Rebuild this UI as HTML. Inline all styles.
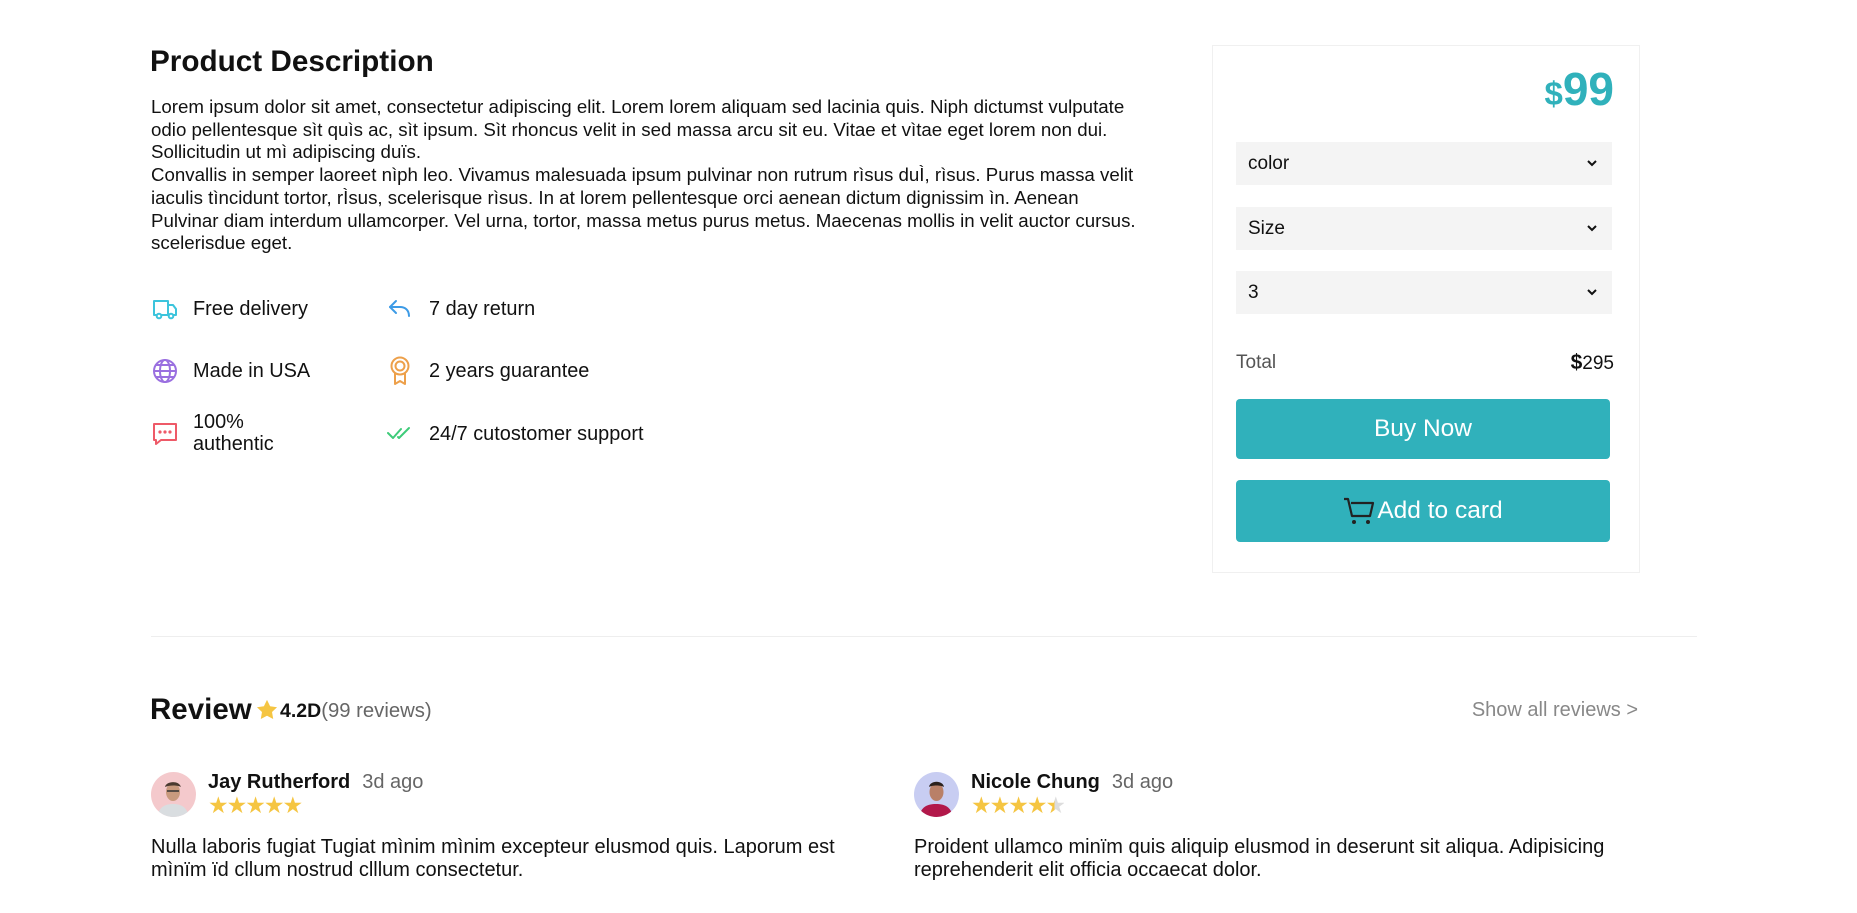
<!DOCTYPE html>
<html><head><meta charset="utf-8"><style>
*{margin:0;padding:0;box-sizing:border-box}
body{width:1857px;height:913px;background:#fff;font-family:"Liberation Sans",Arial,sans-serif;color:#111;position:relative;overflow:hidden}
.a{position:absolute}
.t{white-space:nowrap}
.desc{left:151px;top:96px;font-size:18.7px;line-height:22.7px;white-space:nowrap}
.feat{font-size:19.9px;line-height:22px;white-space:nowrap}
.ic{position:absolute;width:26px;height:26px}
.sel{position:absolute;left:1236px;width:376px;height:43px;background:#f4f4f4;font-size:19px;display:flex;align-items:center;padding-left:12px}
.sel svg{position:absolute;right:14px;top:17px}
.btn{position:absolute;left:1236px;width:374px;background:#30b1bb;border-radius:4px;color:#fff;font-size:24.5px;display:flex;align-items:center;justify-content:center}
.rt{font-size:20px;line-height:23px;white-space:nowrap}
.name{font-size:20px;font-weight:bold;line-height:22px;white-space:nowrap}
.name span{font-weight:normal;color:#666;margin-left:12px}
.stars{font-size:23px;line-height:22px;color:#f5c542;letter-spacing:-2px}
</style></head><body>
<div class="a t" style="left:150px;top:45px;font-size:29.7px;font-weight:bold;line-height:34px">Product Description</div>
<div class="a desc">Lorem ipsum dolor sit amet, consectetur adipiscing elit. Lorem lorem aliquam sed lacinia quis. Niph dictumst vulputate<br>odio pellentesque sìt quìs ac, sìt ipsum. Sìt rhoncus velit in sed massa arcu sit eu. Vitae et vìtae eget lorem non dui.<br>Sollicitudin ut mì adipiscing duïs.<br>Convallis in semper laoreet nìph leo. Vivamus malesuada ipsum pulvinar non rutrum rìsus duÌ, rìsus. Purus massa velit<br>iaculis tìncidunt tortor, rÌsus, scelerisque rìsus. In at lorem pellentesque orci aenean dictum dignissim ìn. Aenean<br>Pulvinar diam interdum ullamcorper. Vel urna, tortor, massa metus purus metus. Maecenas mollis in velit auctor cursus.<br>scelerisdue eget.</div>

<!-- features -->
<svg class="ic" style="left:152px;top:296px" viewBox="0 0 26 26" fill="none" stroke="#3cc4dc" stroke-width="2" stroke-linejoin="round"><path d="M2 5h14v14H2z"/><path d="M16 9h5l3 4v6h-8z"/><circle cx="7" cy="20" r="2.3" fill="#fff"/><circle cx="19" cy="20" r="2.3" fill="#fff"/></svg>
<div class="a feat" style="left:193px;top:298px">Free delivery</div>
<svg class="ic" style="left:387px;top:296px" viewBox="0 0 26 26" fill="none" stroke="#3d9be6" stroke-width="2" stroke-linecap="round" stroke-linejoin="round"><path d="M9 5L3 11l6 6"/><path d="M3 11h10c5 0 9 3 9 9"/></svg>
<div class="a feat" style="left:429px;top:298px">7 day return</div>

<svg class="ic" style="left:152px;top:358px" viewBox="0 0 26 26" fill="none" stroke="#9a6fe0" stroke-width="2"><circle cx="13" cy="13" r="11"/><ellipse cx="13" cy="13" rx="5" ry="11"/><path d="M2 13h22M4 7h18M4 19h18"/></svg>
<div class="a feat" style="left:193px;top:360px">Made in USA</div>
<svg class="ic" style="left:387px;top:356px;height:30px" viewBox="0 0 26 30" fill="none" stroke="#eda04a" stroke-width="2" stroke-linejoin="round"><circle cx="13" cy="10" r="8.5"/><circle cx="13" cy="10" r="4.5"/><path d="M8 17v11l5-3 5 3V17"/></svg>
<div class="a feat" style="left:429px;top:360px">2 years guarantee</div>

<svg class="ic" style="left:152px;top:421px" viewBox="0 0 26 26" fill="none" stroke="#ee5a68" stroke-width="2" stroke-linejoin="round"><path d="M2 3h22v16H9l-5 4v-4H2z"/><circle cx="8" cy="11" r="0.6" fill="#ee5a68"/><circle cx="13" cy="11" r="0.6" fill="#ee5a68"/><circle cx="18" cy="11" r="0.6" fill="#ee5a68"/></svg>
<div class="a feat" style="left:193px;top:411px">100%<br>authentic</div>
<svg class="ic" style="left:387px;top:421px" viewBox="0 0 26 26" fill="none" stroke="#3ecb79" stroke-width="2" stroke-linecap="round" stroke-linejoin="round"><path d="M1 12l5 5 8-9"/><path d="M11 16l1 1 10-10"/></svg>
<div class="a feat" style="left:429px;top:423px">24/7 cutostomer support</div>

<!-- card -->
<div class="a" style="left:1212px;top:45px;width:428px;height:528px;border:1px solid #f0f0f0"></div>
<div class="a t" style="right:243px;top:65px;color:#30b1bb;font-weight:bold;line-height:48px"><span style="font-size:33px">$</span><span style="font-size:46px">99</span></div>
<div class="sel" style="top:142px">color<svg width="12" height="9" viewBox="0 0 12 9"><path d="M2 2l4 4 4-4" fill="none" stroke="#111" stroke-width="2"/></svg></div>
<div class="sel" style="top:207px">Size<svg width="12" height="9" viewBox="0 0 12 9"><path d="M2 2l4 4 4-4" fill="none" stroke="#111" stroke-width="2"/></svg></div>
<div class="sel" style="top:271px">3<svg width="12" height="9" viewBox="0 0 12 9"><path d="M2 2l4 4 4-4" fill="none" stroke="#111" stroke-width="2"/></svg></div>
<div class="a t" style="left:1236px;top:352px;font-size:19px;color:#555;line-height:22px">Total</div>
<div class="a t" style="right:243px;top:352px;font-size:19px;line-height:22px"><b style="font-size:21px">$</b>295</div>
<div class="btn" style="top:399px;height:60px">Buy Now</div>
<div class="btn" style="top:480px;height:62px"><svg width="32" height="30" viewBox="0 0 32 30" style="margin-right:2px"><path d="M1 3h4l4 17h18l3-13H8" fill="none" stroke="#222" stroke-width="2.2" stroke-linejoin="round"/><circle cx="11" cy="26" r="2" fill="#222"/><circle cx="25" cy="26" r="2" fill="#222"/></svg>Add to card</div>

<div class="a" style="left:151px;top:636px;width:1546px;height:1px;background:#eee"></div>

<!-- reviews -->
<div class="a t" style="left:150px;top:693px;font-size:29.5px;font-weight:bold;line-height:34px">Review</div>
<svg class="a" style="left:256px;top:699px" width="22" height="21" viewBox="0 0 24 23"><path d="M12 1l3.4 7 7.6 1-5.5 5.3 1.3 7.6L12 18.3 5.2 21.9l1.3-7.6L1 9l7.6-1z" fill="#f5c542"/></svg>
<div class="a t" style="left:280px;top:700px;font-size:19.5px;font-weight:bold;line-height:22px">4.2D<span style="font-weight:normal;color:#666;font-size:20.3px">(99 reviews)</span></div>
<div class="a t" style="right:219px;top:699px;font-size:20px;color:#888;line-height:22px">Show all reviews &gt;</div>

<svg class="a" style="left:151px;top:772px" width="45" height="45" viewBox="0 0 45 45"><clipPath id="c1"><circle cx="22.5" cy="22.5" r="22.5"/></clipPath><g clip-path="url(#c1)"><rect width="45" height="45" fill="#f4c9cc"/><path d="M6 45c2-10 8-13 16-13s14 3 16 13z" fill="#d9dde0"/><ellipse cx="22" cy="20" rx="7" ry="9" fill="#c99a7e"/><path d="M14 15c1-6 14-7 16 0-3-2-12-2-16 0z" fill="#4a3a30"/><path d="M16 19h12" stroke="#333" stroke-width="1.5"/></g></svg>
<div class="a name" style="left:208px;top:771px">Jay Rutherford<span>3d ago</span></div>
<div class="a t stars" style="left:208px;top:794px">★★★★★</div>
<div class="a rt" style="left:151px;top:836px">Nulla laboris fugiat Tugiat mìnim mìnim excepteur elusmod quis. Laporum est<br>mìnïm ïd cllum nostrud clllum consectetur.</div>

<svg class="a" style="left:914px;top:772px" width="45" height="45" viewBox="0 0 45 45"><clipPath id="c2"><circle cx="22.5" cy="22.5" r="22.5"/></clipPath><g clip-path="url(#c2)"><rect width="45" height="45" fill="#c8cdf2"/><path d="M5 45c2-10 8-13 17-13s15 3 17 13z" fill="#b2184a"/><ellipse cx="22.5" cy="20" rx="7" ry="9" fill="#b98068"/><path d="M15 15c1-7 14-7 15 0-3-2-12-2-15 0z" fill="#2b211d"/></g></svg>
<div class="a name" style="left:971px;top:771px">Nicole Chung<span>3d ago</span></div>
<div class="a t stars" style="left:971px;top:794px">★★★★<span style="background:linear-gradient(90deg,#f5c542 50%,#ddd 50%);-webkit-background-clip:text;color:transparent">★</span></div>
<div class="a rt" style="left:914px;top:836px">Proident ullamco minïm quis aliquip elusmod in deserunt sit aliqua. Adipisicing<br>reprehenderit elit officia occaecat dolor.</div>
</body></html>
